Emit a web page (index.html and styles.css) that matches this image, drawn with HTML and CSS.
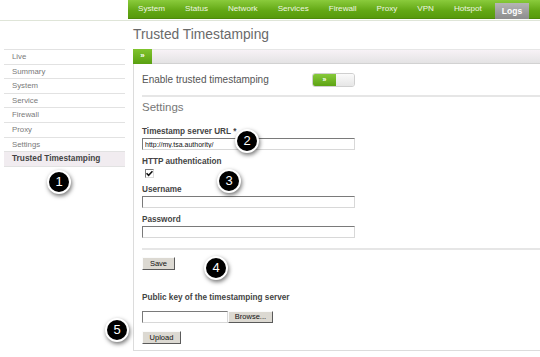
FILE: index.html
```html
<!DOCTYPE html>
<html lang="en">
<head>
    <meta charset="UTF-8">
    <title>Trusted Timestamping</title>
    <link rel="stylesheet" href="styles.css">
</head>
<body>
<div class="page">
    <div class="topbar">
        <nav class="mainnav">
            <div class="navitem">System</div>
            <div class="navitem">Status</div>
            <div class="navitem">Network</div>
            <div class="navitem">Services</div>
            <div class="navitem">Firewall</div>
            <div class="navitem">Proxy</div>
            <div class="navitem">VPN</div>
            <div class="navitem">Hotspot</div>
            <div class="navitem active">Logs</div>
        </nav>
    </div>

    <div class="layout">
        <ul class="sidebar">
            <li>Live</li>
            <li>Summary</li>
            <li>System</li>
            <li>Service</li>
            <li>Firewall</li>
            <li>Proxy</li>
            <li>Settings</li>
            <li class="current">Trusted Timestamping</li>
        </ul>

        <div class="main">
            <h1 class="title">Trusted Timestamping</h1>
            <div class="panel">
                <div class="panel-head">
                    <div class="tab">&raquo;</div>
                </div>
                <div class="panel-body">
                    <div class="enable-row">
                        <span class="enable-label">Enable trusted timestamping</span>
                        <div class="toggle">
                            <span class="toggle-on">&raquo;</span>
                            <span class="toggle-off"></span>
                        </div>
                    </div>
                    <h2 class="section">Settings</h2>

                    <div class="label first">Timestamp server URL *</div>
                    <input class="field" type="text" value="http://my.tsa.authority/">

                    <div class="label">HTTP authentication</div>
                    <span class="checkbox">
                        <svg width="7" height="7" viewBox="0 0 7 7"><path d="M0.5 3.2 L2.6 5.4 L6.5 1.2" fill="none" stroke="#111" stroke-width="1.6"/></svg>
                    </span>

                    <div class="label">Username</div>
                    <input class="field" type="text">

                    <div class="label">Password</div>
                    <input class="field" type="password">

                    <div class="divider"></div>

                    <button class="btn save">Save</button>

                    <div class="label pubkey">Public key of the timestamping server</div>
                    <div class="file-row">
                        <input class="field file" type="text">
                        <button class="btn browse">Browse...</button>
                    </div>
                    <button class="btn upload">Upload</button>
                </div>
            </div>
        </div>
    </div>

    <div class="badge b1">1</div>
    <div class="badge b2">2</div>
    <div class="badge b3">3</div>
    <div class="badge b4">4</div>
    <div class="badge b5">5</div>
</div>
</body>
</html>
```

FILE: styles.css
```css
body {
    margin: 0;
    background: #fff;
    font-family: "Liberation Sans", Arial, sans-serif;
    color: #555;
}

.page {
    position: relative;
    width: 540px;
    height: 357px;
    overflow: hidden;
}

/* top navigation */
.topbar {
    height: 20px;
    border-bottom: 1px solid #dfe5d8;
    display: flex;
    justify-content: flex-end;
}
.mainnav {
    width: 412px;
    height: 19px;
    display: flex;
    align-items: center;
    gap: 6px;
    padding-left: 3px;
    box-sizing: border-box;
    background: linear-gradient(#8acb3c, #62a714 60%, #579a0c);
    border-bottom: 1px solid #4d8a0a;
}
.navitem {
    padding: 0 7px;
    font-size: 8.1px;
    color: #eef6e2;
    line-height: 16px;
}
.navitem.active {
    margin-top: 3px;
    height: 16px;
    padding: 0 7px;
    background: linear-gradient(#b5b5b5, #8c8c8c);
    color: #fff;
    font-weight: bold;
    font-size: 8.5px;
}

/* sidebar + content */
.layout {
    display: flex;
    padding-left: 4px;
}
.sidebar {
    list-style: none;
    margin: 28px 0 0 0;
    padding: 0;
    width: 121px;
    border-top: 1px solid #e2e2e2;
}
.sidebar li {
    font-size: 7.8px;
    color: #7a7a7a;
    height: 13.6px;
    line-height: 13.6px;
    padding-left: 8px;
    border-bottom: 1px solid #e2e2e2;
}
.sidebar li.current {
    background: #f1ecf0;
    color: #444;
    font-weight: bold;
    font-size: 8.3px;
}

.main {
    flex: 1;
    margin-left: 8px;
}
.title {
    margin: 0;
    height: 28px;
    line-height: 27px;
    font-size: 13.8px;
    font-weight: normal;
    color: #6a6a6a;
}
.panel {
    border-left: 1px solid #dcdcdc;
    border-bottom: 1px solid #dcdcdc;
    height: 302px;
    box-sizing: border-box;
}
.panel-head {
    height: 15px;
    margin-left: -1px;
    background: linear-gradient(#f7f2f6, #e4e3e4);
    border-top: 1px solid #e6e6e6;
    border-bottom: 1px solid #d2d2d2;
    box-sizing: border-box;
}
.tab {
    width: 19px;
    height: 15px;
    margin-top: -1px;
    background: linear-gradient(#80c42e, #5aa011);
    color: #fff;
    font-size: 8px;
    font-weight: bold;
    line-height: 14px;
    text-align: center;
}
.panel-body {
    padding-left: 8px;
}

.enable-row {
    display: flex;
    align-items: center;
    height: 31px;
    border-bottom: 2px solid #e6e6e6;
}
.enable-label {
    font-size: 10px;
    color: #555;
    width: 170px;
}
.toggle {
    display: flex;
    height: 12px;
    width: 41px;
    border-radius: 3px;
    overflow: hidden;
    border: 1px solid #cfcfcf;
}
.toggle-on {
    width: 23px;
    background: linear-gradient(#86c93a, #5da313);
    color: #fff;
    font-size: 7px;
    font-weight: bold;
    line-height: 12px;
    text-align: center;
}
.toggle-off {
    flex: 1;
    background: linear-gradient(#fafafa, #e6e6e6);
}

.section {
    margin: 0;
    height: 20px;
    line-height: 20px;
    font-size: 11.5px;
    font-weight: normal;
    color: #777;
}

.label {
    font-size: 8.2px;
    font-weight: bold;
    color: #444;
    height: 10px;
    line-height: 10px;
    margin-top: 7px;
    margin-bottom: 1px;
}
.label.first {
    margin-top: 10px;
}
.field {
    display: block;
    width: 213px;
    height: 12px;
    margin: 0;
    padding: 0 2px;
    box-sizing: border-box;
    border: 1px solid;
    border-color: #7a7a7a #d8d8d8 #d8d8d8 #7a7a7a;
    background: #fff;
    font-family: "Liberation Sans", Arial, sans-serif;
    font-size: 7px;
    color: #111;
    outline: none;
}

.checkbox {
    display: flex;
    align-items: center;
    justify-content: center;
    width: 9px;
    height: 9px;
    margin: 2px 0 0 3px;
    box-sizing: border-box;
    border: 1px solid;
    border-color: #7a7a7a #dcdcdc #dcdcdc #7a7a7a;
    background: #fff;
}

.divider {
    margin-top: 10px;
    border-top: 2px solid #e6e6e6;
}

.btn {
    display: block;
    height: 13px;
    margin: 0;
    padding: 0 5px;
    box-sizing: border-box;
    background: #dcd9d2;
    border: 1px solid;
    border-color: #fbfbfb #5a5a5a #5a5a5a #fbfbfb;
    font-family: "Liberation Sans", Arial, sans-serif;
    font-size: 7.5px;
    color: #111;
    line-height: 10px;
}
.save {
    margin-top: 7px;
    width: 33px;
}
.label.pubkey {
    margin-top: 23px;
    margin-bottom: 8px;
}
.file-row {
    display: flex;
}
.field.file {
    width: 86px;
}
.browse {
    width: 45px;
    height: 12px;
}
.upload {
    margin-top: 8px;
    width: 39px;
}

/* numbered callouts */
.badge {
    position: absolute;
    width: 20px;
    height: 20px;
    border-radius: 50%;
    background: #000;
    border: 2px solid #fff;
    box-shadow: 1px 2px 4px rgba(0, 0, 0, 0.55);
    color: #fff;
    font-size: 13px;
    line-height: 20px;
    text-align: center;
}
.b1 { left: 47px; top: 170px; }
.b2 { left: 235px; top: 129px; }
.b3 { left: 217px; top: 169px; }
.b4 { left: 204px; top: 256px; }
.b5 { left: 105px; top: 318px; }
```
